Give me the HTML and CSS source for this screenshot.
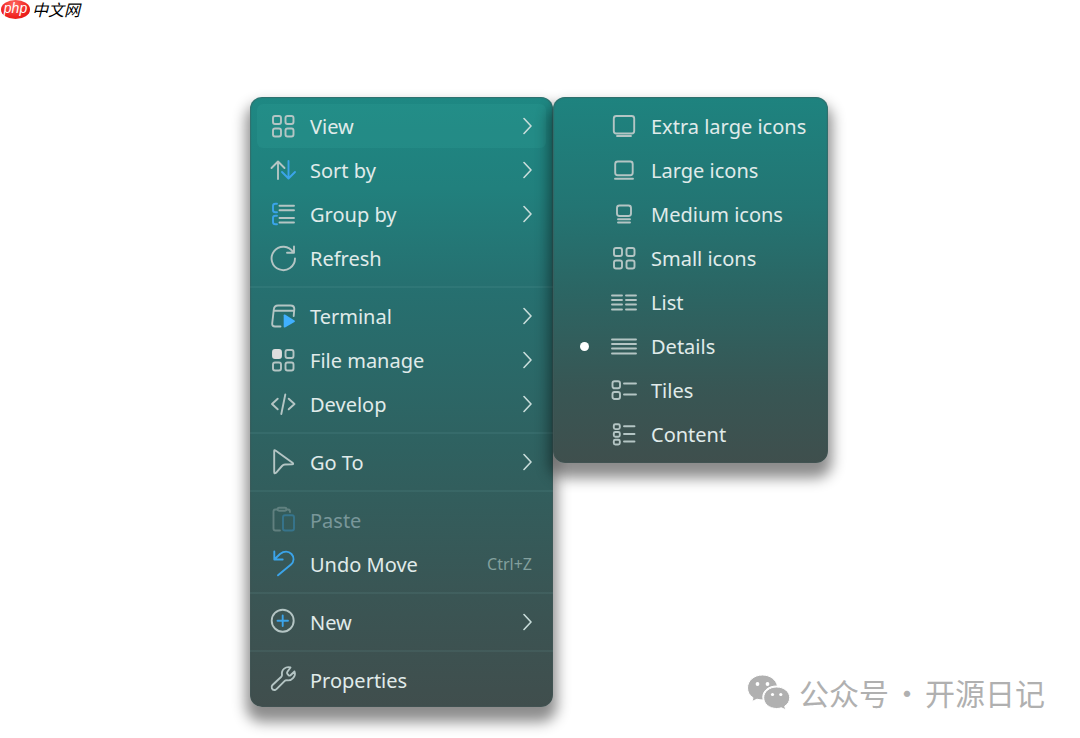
FILE: index.html
```html
<!DOCTYPE html>
<html lang="en">
<head>
<meta charset="utf-8">
<title>Context menu</title>
<link rel="stylesheet" href="styles.css">
</head>
<body>
<svg class="sprite" aria-hidden="true">
  <symbol id="chevron" viewBox="0 0 9 18"><path d="M1 1.5 8 9 1 16.5"/></symbol>
  <symbol id="grid" viewBox="0 0 26 26"><rect x="3" y="3" width="8" height="8" rx="2"/><rect x="15.5" y="3" width="8" height="8" rx="2"/><rect x="3" y="15.5" width="8" height="8" rx="2"/><rect x="15.5" y="15.5" width="8" height="8" rx="2"/></symbol>
</svg>

<header class="brand">
  <span class="brand-mark">php</span>
  <span class="brand-name" lang="zh">中文网</span>
</header>

<main class="stage">
  <div class="menu menu-main" role="menu" aria-label="Context menu">
    <button class="item item-active" role="menuitem" aria-haspopup="true" aria-expanded="true"><svg class="icon"><use href="#grid"/></svg><span class="label">View</span><svg class="chevron"><use href="#chevron"/></svg></button>
    <button class="item" role="menuitem" aria-haspopup="true"><svg class="icon" viewBox="0 0 26 26"><path d="M8 22V5M1.500 11 8 4.500 14.500 11"/><path class="blue" d="M18.500 4V21M12 15l6.500 6.500L25 15"/></svg><span class="label">Sort by</span><svg class="chevron"><use href="#chevron"/></svg></button>
    <button class="item" role="menuitem" aria-haspopup="true"><svg class="icon" viewBox="0 0 26 26"><path d="M9.500 4.700H24M9.500 9.300H24M9.500 17H24M9.500 21.500H24"/><path class="blue" d="M7 2.800H5.500Q3 2.800 3 5V9Q3 11.300 5.500 11.300H7M7 14.800H5.500Q3 14.800 3 17V21Q3 23.300 5.500 23.300H7"/></svg><span class="label">Group by</span><svg class="chevron"><use href="#chevron"/></svg></button>
    <button class="item" role="menuitem"><svg class="icon" viewBox="0 0 26 26"><path d="M25 13.500A11.700 11.700 0 1 1 23.200 7.200M24 1.500V7.800H17"/></svg><span class="label">Refresh</span></button>
    <hr class="separator">
    <button class="item" role="menuitem" aria-haspopup="true"><svg class="icon" viewBox="0 0 26 26"><path d="M10.500 23.500H5Q2 23.500 2.200 20.500L3.800 6.500Q4.200 2.500 8 2.500H20.500Q24.300 2.500 24.300 6L23.700 13M4 7.700H24"/><path class="blue-fill" d="M13.700 12.300V23.800Q13.700 25 15 24.400L24.500 19Q25.500 18.200 24.500 17.400L15 11.600Q13.700 11 13.700 12.300Z"/></svg><span class="label">Terminal</span><svg class="chevron"><use href="#chevron"/></svg></button>
    <button class="item" role="menuitem" aria-haspopup="true"><svg class="icon" viewBox="0 0 26 26"><rect class="solid" x="3" y="3" width="8" height="8" rx="2"/><rect x="15.500" y="3" width="8" height="8" rx="2"/><rect x="3" y="15.500" width="8" height="8" rx="2"/><rect x="15.500" y="15.500" width="8" height="8" rx="2"/></svg><span class="label">File manage</span><svg class="chevron"><use href="#chevron"/></svg></button>
    <button class="item" role="menuitem" aria-haspopup="true"><svg class="icon" viewBox="0 0 26 26"><path d="M7.700 7.700 2 13l5.700 5.300M18.700 7.700 24.500 13l-5.800 5.300M15.300 3.500 11.300 23"/></svg><span class="label">Develop</span><svg class="chevron"><use href="#chevron"/></svg></button>
    <hr class="separator">
    <button class="item" role="menuitem" aria-haspopup="true"><svg class="icon" viewBox="0 0 26 26"><path d="M4.200 2Q4.200.5 5.500 1.500L22.500 13.800Q24 15.200 22 15.400L15 15.500Q13.300 15.600 12 17L6 23.800Q4.200 25.300 4.200 23Z"/></svg><span class="label">Go To</span><svg class="chevron"><use href="#chevron"/></svg></button>
    <hr class="separator">
    <button class="item" role="menuitem" disabled><svg class="icon" viewBox="0 0 26 26"><path d="M7.500 2.500H5.500Q3.500 2.500 3.500 4.500V21.500Q3.500 23.500 5.500 23.500H10M16.500 2.500H18Q20 2.500 20 5"/><rect x="7.500" y=".8" width="9" height="3" rx="1.500"/><rect class="blue" x="13" y="8.300" width="11" height="15.200" rx="2"/></svg><span class="label">Paste</span></button>
    <button class="item" role="menuitem"><svg class="icon" viewBox="0 0 26 26"><path class="blue" d="M4.300.5V8.500H12.700M4.800 8 10 3C14 0 18.500 0 21.500 3C24.500 6.300 24 10.500 21 13.500L8 24.300"/></svg><span class="label">Undo Move</span><kbd class="shortcut">Ctrl+Z</kbd></button>
    <hr class="separator">
    <button class="item" role="menuitem" aria-haspopup="true"><svg class="icon" viewBox="0 0 26 26"><circle cx="12.700" cy="11.700" r="11"/><path class="blue" d="M12.700 6.500V17M7.500 11.700H18"/></svg><span class="label">New</span><svg class="chevron"><use href="#chevron"/></svg></button>
    <hr class="separator">
    <button class="item" role="menuitem"><svg class="icon" viewBox="0 0 26 26"><path d="M20.500 .5C16 -1 11 2.500 12 8Q12 9 11.300 9.700L2.500 18C.5 20 2 23.500 5 23Q6 22.800 7 21.700L15 13.700Q15.800 13 17 13.300C22 14 26.200 9 24.500 4.500L20.500 8.300Q19.500 9 18.500 8.200L17.500 7Q16.600 6 17.400 4.700Z"/></svg><span class="label">Properties</span></button>
  </div>

  <div class="menu menu-sub" role="menu" aria-label="View">
    <button class="item" role="menuitemradio" aria-checked="false"><span class="dot"></span><svg class="icon" viewBox="0 0 26 26"><rect x="2.800" y="3" width="20.400" height="17.500" rx="2.500"/><path d="M6 23H20"/></svg><span class="label">Extra large icons</span></button>
    <button class="item" role="menuitemradio" aria-checked="false"><span class="dot"></span><svg class="icon" viewBox="0 0 26 26"><rect x="4.200" y="4.500" width="17.500" height="13.800" rx="2.500"/><path d="M4 21.700H22"/></svg><span class="label">Large icons</span></button>
    <button class="item" role="menuitemradio" aria-checked="false"><span class="dot"></span><svg class="icon" viewBox="0 0 26 26"><rect x="6" y="4.500" width="14" height="10.500" rx="2.500"/><path d="M7 18.200H19M7 21.500H19"/></svg><span class="label">Medium icons</span></button>
    <button class="item" role="menuitemradio" aria-checked="false"><span class="dot"></span><svg class="icon"><use href="#grid"/></svg><span class="label">Small icons</span></button>
    <button class="item" role="menuitemradio" aria-checked="false"><span class="dot"></span><svg class="icon" viewBox="0 0 26 26"><path d="M1 6.500H11M15 6.500H25M1 11H11M15 11H25M1 15.500H11M15 15.500H25M1 20.500H11M15 20.500H25"/></svg><span class="label">List</span></button>
    <button class="item" role="menuitemradio" aria-checked="true"><span class="dot"></span><svg class="icon" viewBox="0 0 26 26"><path d="M1 6.500H25M1 11H25M1 15.500H25M1 20.500H25"/></svg><span class="label">Details</span></button>
    <button class="item" role="menuitemradio" aria-checked="false"><span class="dot"></span><svg class="icon" viewBox="0 0 26 26"><rect x="1.500" y="4.300" width="7.500" height="7" rx="2"/><rect x="1.500" y="15" width="7.500" height="7" rx="2"/><path d="M13 6.500H25M13 17.500H25"/></svg><span class="label">Tiles</span></button>
    <button class="item" role="menuitemradio" aria-checked="false"><span class="dot"></span><svg class="icon" viewBox="0 0 26 26"><rect x="2.800" y="3.300" width="6" height="4.800" rx="1.500"/><rect x="2.800" y="11" width="6" height="4.800" rx="1.500"/><rect x="2.800" y="18.700" width="6" height="4.800" rx="1.500"/><path d="M13 5.300H23.500M13 13H23.500M13 20.500H23.500"/></svg><span class="label">Content</span></button>
  </div>
</main>

<footer class="credit" lang="zh">
  <svg class="credit-logo" viewBox="0 0 44 36" aria-hidden="true">
    <path d="M15.500 1C7 1 .5 6.700.5 14c0 4 2 7.300 5.500 9.700L5 27.500l5-2.300c2 .6 4 .8 6.200.8C14 18 21 11.500 30.500 12 29 5.500 23 1 15.500 1Z"/>
    <path d="M29.700 13c-7.500 0-13 4.800-13 10.700 0 6 5.500 10.800 13 10.800 1.700 0 3.200-.3 4.700-.7l4.300 2-1-3.600c3.200-2 5-5 5-8.500C42.700 17.800 37 13 29.700 13Z"/>
    <g class="credit-eyes"><circle cx="10.500" cy="10" r="1.900"/><circle cx="20.500" cy="10" r="1.900"/><circle cx="25.500" cy="20.500" r="1.600"/><circle cx="33.800" cy="20.500" r="1.600"/></g>
  </svg>
  <span>公众号</span><span class="credit-dot">·</span><span>开源日记</span>
</footer>
</body>
</html>
```
FILE: styles.css
```css
* { box-sizing: border-box; }

body {
  margin: 0;
  min-height: 100vh;
  background: #fff;
  font-family: "Noto Sans", "Open Sans", sans-serif;
}

.sprite { position: absolute; width: 0; height: 0; }

.brand {
  display: flex;
  align-items: flex-start;
  gap: 2px;
  height: 25px;
  padding-left: 1px;
}

.brand-mark {
  width: 29px;
  height: 19px;
  border-radius: 50%;
  background: radial-gradient(ellipse at 45% 25%, #ff6a62, #f02320 60%, #d81412);
  color: #fff;
  font: italic 14px/17px "Liberation Sans", sans-serif;
  text-align: center;
}

.brand-name {
  color: #000;
  font: italic 16px/18px "Noto Sans CJK SC", sans-serif;
}

.stage {
  display: flex;
  justify-content: center;
  align-items: flex-start;
  padding: 72px 2px 31px 0;
}

.menu {
  display: flex;
  flex-direction: column;
  padding: 7px 7px 5px;
  border-radius: 12px;
  box-shadow: 0 11px 14px 4px rgba(0, 0, 0, .45), inset 0 0 1px 1px rgba(70, 90, 90, .5);
}

.menu-main {
  width: 303px;
  background: linear-gradient(#1e8883, #21807d 15%, #267070 31%, #2f6160 58%, #3a5554 82%, #404e4d);
}

.menu-sub {
  width: 275px;
  padding-bottom: 7px;
  background: linear-gradient(#1e837f, #237573 30%, #2b6664 52%, #385654 80%, #3f4f4d);
}

.item {
  display: flex;
  align-items: center;
  height: 44px;
  padding: 0 14px 0 13px;
  border: 0;
  border-radius: 6px;
  background: none;
  color: #e0ebea;
  font: 20px/28px "Noto Sans", "Open Sans", sans-serif;
  text-align: left;
  white-space: nowrap;
}

.item-active { background: rgba(50, 165, 155, .22); }

.menu-sub .item { padding: 0 13px 0 20px; }

.icon {
  flex: none;
  width: 26px;
  height: 26px;
  margin-right: 14px;
  overflow: visible;
  fill: none;
  stroke: #b4c5c4;
  stroke-width: 1.9;
  stroke-linecap: round;
  stroke-linejoin: round;
}

.icon .blue { stroke: #3ba4ea; }
.icon .blue-fill { fill: #40b0ff; stroke: none; }
.icon .solid { fill: #dedede; stroke: #dedede; }

.label {
  flex: 1;
  padding-top: 2px;
}

.chevron {
  flex: none;
  width: 9px;
  height: 18px;
  fill: none;
  stroke: #c8dcda;
  stroke-width: 1.6;
  stroke-linecap: round;
  stroke-linejoin: round;
}

.shortcut {
  color: #83a09e;
  font: 16px/24px "Noto Sans", "Open Sans", sans-serif;
}

.item:disabled .icon { opacity: .35; }
.item:disabled .label { color: #79979a; }

.separator {
  width: auto;
  height: 2px;
  margin: 6px -7px;
  border: 0;
  background: rgba(130, 190, 190, .1);
}

.dot {
  flex: none;
  width: 9px;
  height: 9px;
  margin-right: 22px;
  border-radius: 50%;
}

[aria-checked="true"] .dot { background: #fff; }

.credit {
  position: absolute;
  right: 35px;
  bottom: 24px;
  display: flex;
  align-items: center;
  color: #b0b0b0;
  font: 30px/44px "Noto Sans CJK SC", sans-serif;
}

.credit-logo {
  width: 44px;
  height: 36px;
  margin-right: 8px;
  fill: #b0b0b0;
  stroke: #fff;
  stroke-width: 1;
}

.credit-eyes { fill: #fff; stroke: none; }

.credit-dot { width: 36px; text-align: center; }
```
